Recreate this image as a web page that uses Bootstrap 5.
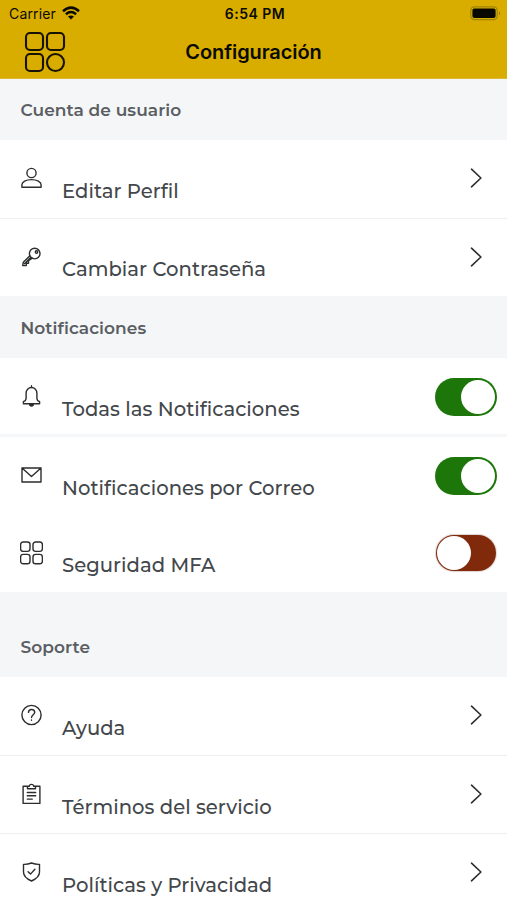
<!DOCTYPE html>
<html lang="es">
<head>
<meta charset="utf-8">
<meta name="viewport" content="width=device-width, initial-scale=1">
<title>Configuración</title>
<link rel="stylesheet" href="https://cdn.jsdelivr.net/npm/bootstrap@5.3.0/dist/css/bootstrap.min.css">
<style>
body{font-family:Montserrat,Inter,sans-serif;background:#fff;height:900px;overflow:hidden;color:#43474b;font-variant-ligatures:none}
svg{display:block;fill:none;stroke:#2b2d2e;stroke-width:1.4;stroke-linecap:round;stroke-linejoin:round;flex:none}
.top-area{height:79px;background:#d8ad00;border-bottom:1px solid #dcb733;color:#0b0a00;font-family:Inter,sans-serif}
.status-bar{height:27px;padding:0 6px 0 9px;font-size:14px;line-height:27px}
.status-bar>div{flex:1}
.carrier{letter-spacing:.15px}
.wifi{margin:-1px 0 0 5px}
.clock{font-weight:600;font-size:14px;text-align:center;letter-spacing:.5px}
.title-bar{height:52px;padding:0 24px}
.title-bar h1{font-size:20px;font-weight:600;margin:0;line-height:50px;letter-spacing:-.1px}
.title-bar svg,.title-bar h1{margin-top:-2px}
.side{width:42px;flex:none}
.section-head{height:62px;background:#f5f6f8;padding:3px 0 0 20.5px;font-size:17px;font-weight:600;color:#5a5e63;margin:0;line-height:1;letter-spacing:.06px}
.section-head.first{height:61px;padding-top:2px}
.section-head.tall{height:85px;padding-top:25px}
.setting{height:78.5px;padding:0 10px 0 20px;border-bottom:1.5px solid #eeeff1}
.setting.last-item{height:77px;border:0}
.setting.thick{height:79px;border-bottom:3px solid #f6f7f9}
.setting .glyph{width:23px;height:76px;margin-right:19px;flex:none}
.setting .label-text{flex:1;font-size:19.6px;font-weight:500;line-height:24px;padding-top:39px;white-space:nowrap;letter-spacing:.04px}
.setting.last-item .label-text{padding-top:38px}
.setting .action{height:76px}
.chev{margin-right:14px;stroke-width:1.6}
.toggle{width:62px;height:38px;border-radius:19px;background:#1d7609;padding:2px;margin-top:2px}
.toggle i{width:34px;height:34px;border-radius:50%;background:#fff}
.toggle.off{width:60px;height:36px;background:#80290b;padding:1px;margin:0 1px 0 0;box-shadow:0 0 1px 1px #ddd3d0}
</style>
</head>
<body>
<header class="top-area">
  <div class="status-bar d-flex align-items-center">
    <div class="d-flex align-items-center"><span class="carrier">Carrier</span>
      <svg class="wifi" width="20" height="15" viewBox="0 0 20 15"><g stroke="#0b0a00" stroke-width="2.5" stroke-linecap="butt"><path d="M2 5.2Q10-2 18 5.2M4.9 8.2q5.1-4.3 10.2 0"/></g><path d="M10 13.5 7 10.6q3-2.2 6 0Z" fill="#0b0a00" stroke="none"/></svg></div>
    <div class="clock">6:54 PM</div>
    <div class="d-flex justify-content-end"><svg width="31" height="15" viewBox="0 0 31 15"><rect x=".8" y=".8" width="26.4" height="12.8" rx="3.6" stroke="#a18404" stroke-width="1.3"/><rect x="2.4" y="2.5" width="23.2" height="9.4" rx="2" fill="#080800" stroke="none"/><path d="M29 5.3q2 2 0 4Z" fill="#8a7206" stroke="none"/></svg></div>
  </div>
  <div class="title-bar d-flex align-items-center justify-content-between">
    <svg class="side" width="42" height="42" viewBox="0 0 42 42" style="stroke:#171300;stroke-width:2.1"><rect x="2" y="2" width="17" height="17" rx="4"/><rect x="23" y="2" width="17" height="17" rx="4"/><rect x="2" y="23" width="17" height="17" rx="4"/><circle cx="31.5" cy="31.5" r="8.5"/></svg>
    <h1>Configuración</h1><div class="side"></div>
  </div>
</header>
<main>
  <h2 class="section-head first d-flex align-items-center"><span>Cuenta de usuario</span></h2>
  <div class="setting d-flex"><div class="glyph d-flex align-items-center justify-content-center"><svg width="23" height="22" viewBox="0 0 23 22"><circle cx="11.5" cy="6" r="4.6"/><path d="M1.9 20.2v-2.4c0-3.1 4.1-5.2 9.6-5.2s9.6 2.1 9.6 5.2v2.4Z"/></svg></div><span class="label-text">Editar Perfil</span><div class="action d-flex align-items-center"><svg class="chev" width="13" height="20" viewBox="0 0 13 20"><path d="m1.5 1.2 9.4 8.8-9.4 8.8"/></svg></div></div>
  <div class="setting last-item d-flex"><div class="glyph d-flex align-items-center justify-content-center"><svg width="21" height="20" viewBox="-.5 0 21 20"><circle cx="13.2" cy="6.6" r="5.3"/><circle cx="15" cy="5" r="1.2"/><path d="M8.4 8.7 1.8 15.2 1.2 18.6H4.8V16.3H7V13.7L10.8 11.2M3 16.7 9.2 10.5"/></svg></div><span class="label-text">Cambiar Contraseña</span><div class="action d-flex align-items-center"><svg class="chev" width="13" height="20" viewBox="0 0 13 20"><path d="m1.5 1.2 9.4 8.8-9.4 8.8"/></svg></div></div>
  <h2 class="section-head d-flex align-items-center"><span>Notificaciones</span></h2>
  <div class="setting thick d-flex"><div class="glyph d-flex align-items-center justify-content-center"><svg width="21" height="24" viewBox="-.5 -.5 21 24"><path d="M10 1.2v1.6M10 3C6.8 3 4.6 5.5 4.6 8.7V14L3.8 16.2 1.9 17.2V19.2H18.1V17.2L16.2 16.2 15.4 14V8.7C15.4 5.5 13.2 3 10 3M8.2 20.5q1.8 2 3.6 0Z"/></svg></div><span class="label-text">Todas las Notificaciones</span><div class="action d-flex align-items-center"><div class="toggle d-flex justify-content-end"><i></i></div></div></div>
  <div class="setting border-0 d-flex"><div class="glyph d-flex align-items-center justify-content-center"><svg width="23" height="16" viewBox="-.5 0 23 16"><path d="M1.5 1h19v14h-19ZM1.5 1 11 9.6 20.5 1"/></svg></div><span class="label-text">Notificaciones por Correo</span><div class="action d-flex align-items-center"><div class="toggle d-flex justify-content-end"><i></i></div></div></div>
  <div class="setting last-item d-flex"><div class="glyph d-flex align-items-center justify-content-center"><svg width="23" height="24" viewBox=".4 0 23 24"><rect x="1" y="1" width="9.4" height="9.4" rx="2.6"/><rect x="13.4" y="1" width="9.4" height="9.4" rx="2.6"/><rect x="1" y="13.4" width="9.4" height="9.4" rx="2.6"/><rect x="13.4" y="13.4" width="9.4" height="9.4" rx="2.6"/></svg></div><span class="label-text">Seguridad MFA</span><div class="action d-flex align-items-center"><div class="toggle off d-flex"><i></i></div></div></div>
  <h2 class="section-head tall d-flex align-items-center"><span>Soporte</span></h2>
  <div class="setting d-flex"><div class="glyph d-flex align-items-center justify-content-center"><svg width="23" height="22" viewBox="-.5 0 23 22"><circle cx="11" cy="11" r="9.6"/><path d="M8 8.4c0-4 6.2-3.9 6.2-.1 0 2.4-3.2 2.6-3.2 5.3M11 16v.3"/></svg></div><span class="label-text">Ayuda</span><div class="action d-flex align-items-center"><svg class="chev" width="13" height="20" viewBox="0 0 13 20"><path d="m1.5 1.2 9.4 8.8-9.4 8.8"/></svg></div></div>
  <div class="setting d-flex"><div class="glyph d-flex align-items-center justify-content-center"><svg width="21" height="22" viewBox="-.5 0 21 22"><path d="M6 3.3H1.6V20.4H18.4V3.3H14M6 5.8V3.3H7.7C8 .7 12 .7 12.3 3.3H14V5.8ZM5.8 9.5h8.4M5.8 12.8h8.4M5.8 16.1h5"/></svg></div><span class="label-text">Términos del servicio</span><div class="action d-flex align-items-center"><svg class="chev" width="13" height="20" viewBox="0 0 13 20"><path d="m1.5 1.2 9.4 8.8-9.4 8.8"/></svg></div></div>
  <div class="setting d-flex"><div class="glyph d-flex align-items-center justify-content-center"><svg width="19" height="20" viewBox="-.5 0 19 20"><path d="M9 1Q13 2.6 17 2.4V10Q17 15.5 9 19 1 15.5 1 10V2.4Q5 2.6 9 1ZM5.6 9.8 8 12.1 12.4 7.3"/></svg></div><span class="label-text">Políticas y Privacidad</span><div class="action d-flex align-items-center"><svg class="chev" width="13" height="20" viewBox="0 0 13 20"><path d="m1.5 1.2 9.4 8.8-9.4 8.8"/></svg></div></div>
</main>
<script src="https://cdn.jsdelivr.net/npm/bootstrap@5.3.0/dist/js/bootstrap.bundle.min.js"></script>
</body>
</html>
